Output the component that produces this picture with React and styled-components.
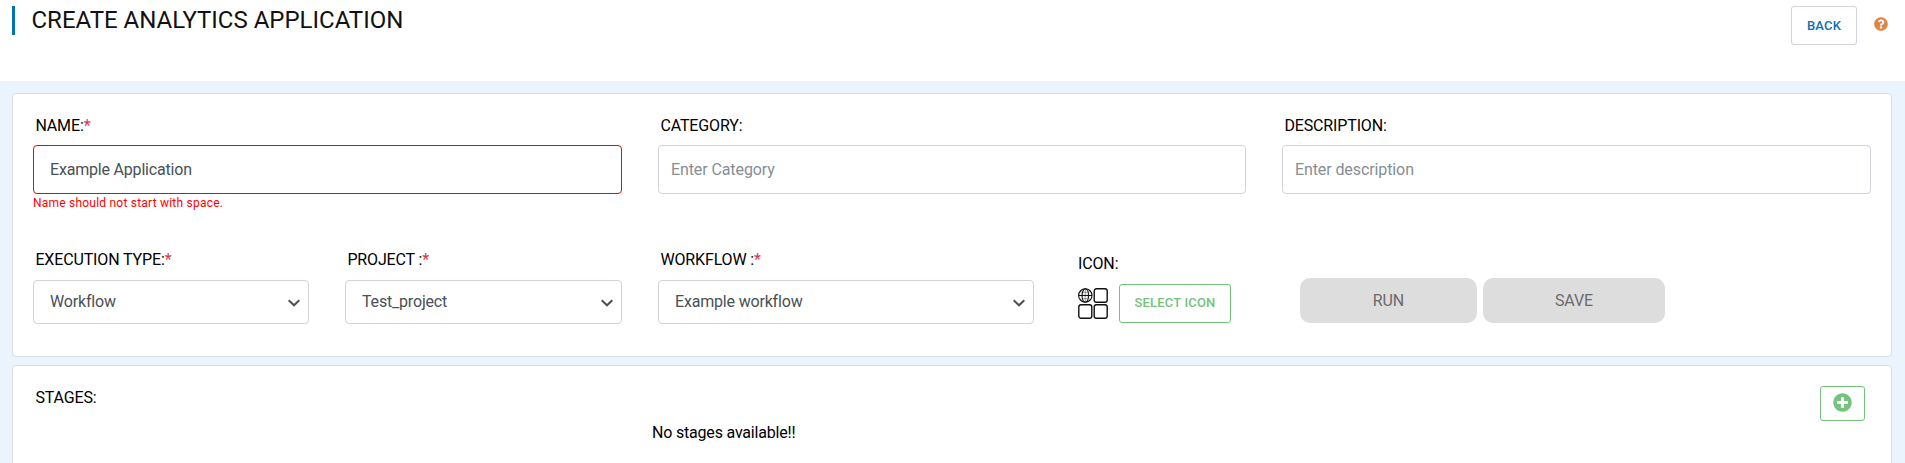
import React from "react";
import styled, { createGlobalStyle } from "styled-components";
import { FaPlusCircle, FaQuestionCircle } from "react-icons/fa";

const GlobalStyle = createGlobalStyle`
  *, *::before, *::after { box-sizing: border-box; }
  body {
    margin: 0;
    background: #fff;
    color: #111;
    font: 400 16px/24px Roboto, "Liberation Sans", sans-serif;
    overflow: hidden;
  }
  input, button { font-family: inherit; }
`;

const Page = styled.div`
  height: 463px;
  display: flex;
  flex-direction: column;
  overflow: hidden;
`;

const Header = styled.header`
  height: 81px;
  flex: none;
  padding: 6px 17px 0 12px;
  display: flex;
  justify-content: space-between;
  align-items: flex-start;
`;

const Title = styled.h1`
  margin: 0;
  height: 29px;
  padding-left: 16.5px;
  border-left: 3px solid #0073b7;
  font-size: 24px;
  line-height: 28px;
  font-weight: 400;
`;

const HeaderActions = styled.div`
  display: flex;
  gap: 17px;
`;

const OutlineButton = styled.button`
  width: ${(p) => p.$width}px;
  height: ${(p) => p.$height}px;
  flex: none;
  padding: 0 0 ${(p) => p.$lift || 0}px;
  display: flex;
  align-items: center;
  justify-content: center;
  background: #fff;
  border: 1px solid ${(p) => p.$border};
  border-radius: 3px;
  color: ${(p) => p.$color};
  font-size: 13px;
  font-weight: 500;
  letter-spacing: ${(p) => p.$spacing || 0}px;
`;

const Help = styled(FaQuestionCircle)`
  width: 14px;
  height: 14px;
  margin-top: 11px;
  color: #e28343;
`;

const Content = styled.main`
  flex: 1;
  padding: 12px 13px 0 12px;
  display: flex;
  flex-direction: column;
  gap: 8px;
  background: #e9f4ff;
`;

const Card = styled.section`
  height: ${(p) => p.$height}px;
  flex: none;
  padding: ${(p) => p.$pad};
  background: #fff;
  border: 1px solid #dbdee1;
  border-radius: 4px;
`;

const TextRow = styled.div`
  display: grid;
  grid-template-columns: 589px 588px 589px;
  gap: 36px;
  height: 134px;
`;

const ControlRow = styled.div`
  display: grid;
  grid-template-columns: 276px 277px 376px 161px 397px;
  column-gap: 36px;
  align-items: start;
  & > :nth-child(4) { margin-left: 8px; }
  & > :nth-child(5) { margin-left: 33px; }
`;

const Field = styled.div`
  display: flex;
  flex-direction: column;
  padding-top: ${(p) => p.$top || 0}px;
`;

const Label = styled.label`
  height: ${(p) => p.$height || 32}px;
  padding: ${(p) => (p.$level ? 0 : 1)}px 0 0 ${(p) => (p.$flush ? 0 : 2.4)}px;
  color: #000;
  font-size: 16px;
  line-height: 24px;
  letter-spacing: -0.14px;
  white-space: pre;
`;

const Star = styled.span`
  color: #dc3545;
`;

const Input = styled.input`
  width: 100%;
  height: 49px;
  padding: 0 ${(p) => (p.$invalid ? 16 : 12)}px;
  border: 1px solid ${(p) => (p.$invalid ? "#f00" : "#ced4da")};
  border-radius: 4px;
  outline: 0;
  background: #fff;
  color: #495057;
  font-size: 16px;
  letter-spacing: ${(p) => (p.$invalid ? -0.19 : -0.1)}px;
  &::placeholder { color: #868e96; opacity: 1; }
`;

const ErrorText = styled.div`
  font-size: 12px;
  line-height: 18px;
  letter-spacing: 0.22px;
  color: #f00;
`;

const SelectBox = styled.div`
  height: 44px;
  padding: 0 8px 0 16px;
  display: flex;
  align-items: center;
  justify-content: space-between;
  border: 1px solid #ced4da;
  border-radius: 4px;
  color: #495057;
  letter-spacing: -0.18px;
`;

const Chevron = styled.svg`
  width: 12px;
  height: 8px;
  margin-top: 2px;
`;

const IconPicker = styled.div`
  display: flex;
  align-items: center;
  gap: 11px;
`;

const RunActions = styled.div`
  display: flex;
  gap: 6px;
  padding-top: 31px;
`;

const DisabledButton = styled.button`
  width: ${(p) => p.$width}px;
  height: 45px;
  flex: none;
  padding: 0;
  border: 0;
  border-radius: 10px;
  background: #ddd;
  color: #6b6b6b;
  font-size: 16px;
  letter-spacing: -0.1px;
`;

const StagesHead = styled.div`
  display: flex;
  justify-content: space-between;
  height: 35px;
`;

const Empty = styled.p`
  margin: 0 0 0 619px;
  color: #000;
  letter-spacing: -0.19px;
`;

function Select({ value }) {
  return (
    <SelectBox>
      {value}
      <Chevron viewBox="0 0 12 8" fill="none" stroke="#495057" strokeWidth="2">
        <path d="M.7 1.2 6 6.3 11.3 1.2" />
      </Chevron>
    </SelectBox>
  );
}

function AppIcon() {
  return (
    <svg width="30" height="31" viewBox="0 0 30 31" fill="none" stroke="#111" strokeWidth="1.4">
      <rect x="16.2" y="0.8" width="13" height="13.4" rx="2.2" />
      <rect x="0.8" y="16.8" width="13" height="13.4" rx="2.2" />
      <rect x="16.2" y="16.8" width="13" height="13.4" rx="2.2" />
      <g strokeWidth="1.1">
        <circle cx="7.3" cy="7.5" r="6.7" />
        <ellipse cx="7.3" cy="7.5" rx="3.2" ry="6.7" />
        <path d="M.6 7.5h13.4" />
        <path d="M7.3 .8v13.4M2 3.8q5.3 1.2 10.6 0M2 11.2q5.3-1.2 10.6 0" strokeWidth=".4" />
      </g>
    </svg>
  );
}

export default function App() {
  return (
    <Page>
      <GlobalStyle />
      <Header>
        <Title>CREATE ANALYTICS APPLICATION</Title>
        <HeaderActions>
          <OutlineButton $width={66} $height={39} $border="#ced4da" $color="#0b70b5" $spacing={0.2}>
            BACK
          </OutlineButton>
          <Help />
        </HeaderActions>
      </Header>
      <Content>
        <Card $height={264} $pad="19px 20px 0">
          <TextRow>
            <Field>
              <Label>NAME:<Star>*</Star></Label>
              <Input $invalid defaultValue="Example Application" />
              <ErrorText>Name should not start with space.</ErrorText>
            </Field>
            <Field>
              <Label>CATEGORY:</Label>
              <Input placeholder="Enter Category" />
            </Field>
            <Field>
              <Label>DESCRIPTION:</Label>
              <Input placeholder="Enter description" />
            </Field>
          </TextRow>
          <ControlRow>
            <Field>
              <Label $height={33}>EXECUTION TYPE:<Star>*</Star></Label>
              <Select value="Workflow" />
            </Field>
            <Field>
              <Label $height={33}>PROJECT :<Star>*</Star></Label>
              <Select value="Test_project" />
            </Field>
            <Field>
              <Label $height={33}>WORKFLOW :<Star>*</Star></Label>
              <Select value="Example workflow" />
            </Field>
            <Field $top={4}>
              <Label $flush $height={33}>ICON:</Label>
              <IconPicker>
                <AppIcon />
                <OutlineButton $width={112} $height={39} $lift={2} $border="#74c27e" $color="#74c27e" $spacing={0.17}>
                  SELECT ICON
                </OutlineButton>
              </IconPicker>
            </Field>
            <RunActions>
              <DisabledButton $width={177}>RUN</DisabledButton>
              <DisabledButton $width={182}>SAVE</DisabledButton>
            </RunActions>
          </ControlRow>
        </Card>
        <Card $height={140} $pad="20px 26px 0 20px">
          <StagesHead>
            <Label $level>STAGES:</Label>
            <OutlineButton $width={45} $height={35} $lift={2} $border="#74c27e" $color="#74c27e">
              <FaPlusCircle size={19} />
            </OutlineButton>
          </StagesHead>
          <Empty>No stages available!!</Empty>
        </Card>
      </Content>
    </Page>
  );
}
